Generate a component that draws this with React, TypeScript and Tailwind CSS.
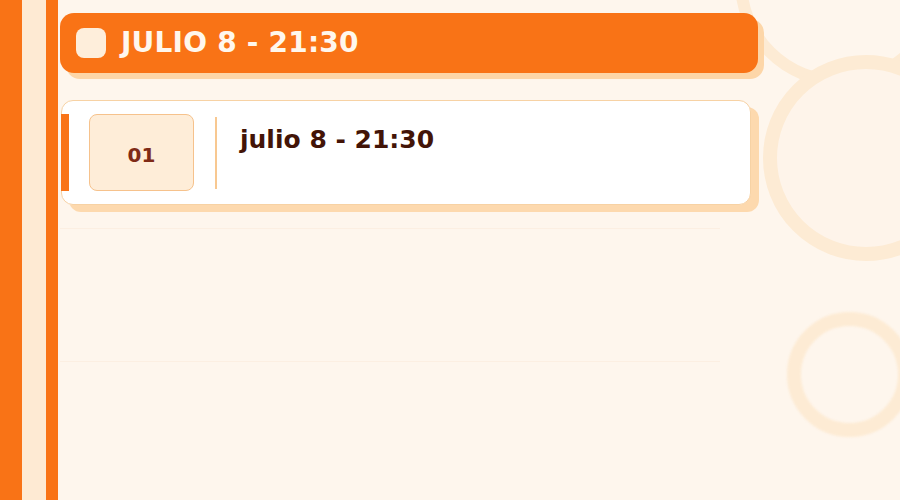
import React from 'react';

type Slot = { id: string; index: string; title: string };

const slots: Slot[] = [{ id: 'jul-8-2130', index: '01', title: 'julio 8 - 21:30' }];

function Rings() {
  return (
    <div className="pointer-events-none absolute inset-0 overflow-hidden">
      <div className="absolute left-[735px] top-[-123px] h-[210px] w-[210px] rounded-full border-[12px] border-[#fdebd4]" />
      <div className="absolute left-[763px] top-[55px] h-[206px] w-[206px] rounded-full border-[14px] border-[#fdebd4] bg-[#fef4ea]" />
      <div className="absolute left-[787px] top-[312px] h-[125px] w-[125px] rounded-full border-[14px] border-[#fdebd4] blur-[1px]" />
    </div>
  );
}

function SlotCard({ slot }: { slot: Slot }) {
  return (
    <div className="relative ml-[1px] flex h-[105px] w-[690px] items-stretch rounded-[12px] border border-[#f7d2a4] bg-white py-[13px] pl-[27px] shadow-[8px_7px_0_#fdd9ae]">
      <span className="absolute left-[-1px] top-[13px] h-[77px] w-[8px] bg-[#f97316]" />
      <div className="flex w-[105px] items-center justify-center rounded-[8px] border border-[#f6c28c] bg-[#feedd8] pt-[5px]">
        <span className="text-[20px] font-bold text-[#7f2a16]">{slot.index}</span>
      </div>
      <div className="ml-[21px] mt-[3px] mb-[2px] w-[2px] bg-[#f8c891]" />
      <div className="ml-[23px] pt-[11px]">
        <h3 className="text-[25px] font-bold leading-[30px] text-[#431407]">{slot.title}</h3>
      </div>
    </div>
  );
}

export default function App() {
  return (
    <div
      className="relative flex h-screen w-full overflow-hidden bg-[#fef6ed]"
      style={{ fontFamily: '"DejaVu Sans", Verdana, sans-serif' }}
    >
      <Rings />

      {/* side stripes */}
      <div className="w-[22px] shrink-0 bg-[#f97316]" />
      <div className="w-[24px] shrink-0 bg-[#feead3]" />
      <div className="w-[12px] shrink-0 bg-[#f97316]" />

      <main className="relative z-10 flex-1 pl-[2px] pt-[13px]">
        <header className="flex h-[60px] w-[698px] items-center gap-[15px] rounded-[14px] bg-[#f97316] pl-[16px] shadow-[6px_6px_0_#fdd6a8]">
          <span className="h-[30px] w-[30px] rounded-[8px] bg-[#feeedb]" />
          <h1 className="text-[28px] font-bold tracking-[0.2px] text-[#fff7ed]">JULIO 8 - 21:30</h1>
        </header>

        <div className="mt-[27px] flex flex-col">
          {slots.map((s) => (
            <SlotCard key={s.id} slot={s} />
          ))}
        </div>

        <div className="mt-[23px] w-[660px] border-t border-[#fcefe2]" />
        <div className="mt-[132px] w-[660px] border-t border-[#fcefe2]" />
      </main>
    </div>
  );
}
